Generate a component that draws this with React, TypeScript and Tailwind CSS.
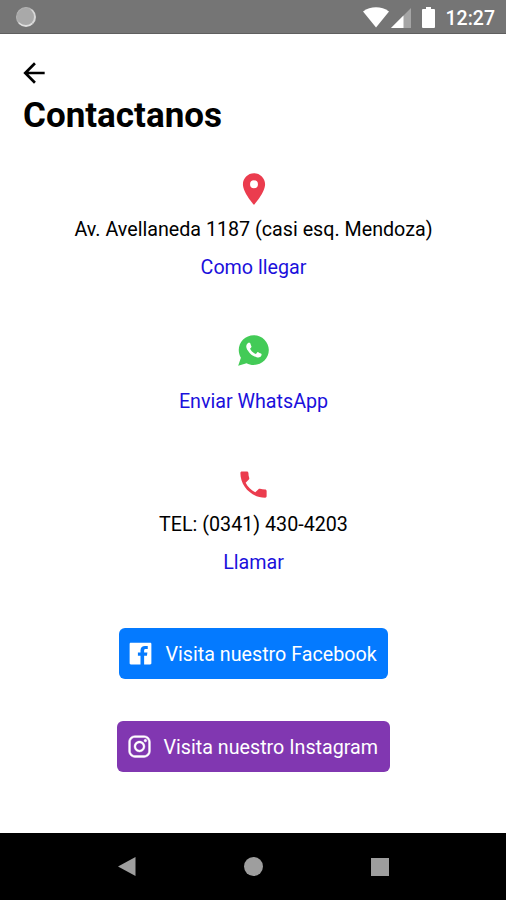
import React from 'react'
import { IoLogoFacebook, IoLogoInstagram, IoLogoWhatsapp } from 'react-icons/io'
import { MdArrowBack, MdLocationOn, MdPhone } from 'react-icons/md'

function StatusBar() {
    return (
        <header className="flex h-[34px] items-center border-b border-[#5f5f5f] bg-[#757575] pl-4 pr-[11px] text-white">
            <span className="h-5 w-5 rounded-full border border-[#b4b4b4] border-b-2 border-b-[#e0e0e0] border-r-2 border-r-[#d8d8d8] bg-[#a9a9a9]" />
            <svg className="ml-auto mt-px h-[21px] w-[26px]" viewBox="0 0 26 21" fill="currentColor">
                <path d="M0 4.5C7.5-1.1 18.5-1.1 26 4.5L13 20.5Z" />
            </svg>
            <svg className="ml-[2px] mt-[2px] h-5 w-5" viewBox="0 0 20 20" fill="currentColor">
                <path d="M0 20L20 0V20Z" opacity="0.35" />
                <path d="M0 20L12.5 7.5V20Z" />
            </svg>
            <svg className="ml-[11px] mt-[2px] h-[21px] w-[13px]" viewBox="0 0 13 21" fill="currentColor">
                <path d="M4 0h5v2h3q1 0 1 1v17q0 1-1 1H1q-1 0-1-1V3q0-1 1-1h3z" />
            </svg>
            <span className="ml-[11px] mt-1 text-[19.5px] font-medium leading-none">12:27</span>
        </header>
    )
}

function NavigationBar() {
    return (
        <nav className="flex h-[67px] items-center justify-between bg-black pl-[118px] pr-[117px] text-[#9e9e9e]">
            <svg className="h-[19px] w-[18px]" viewBox="0 0 18 19" fill="currentColor">
                <path d="M0 9.5L17.5 0V19Z" />
            </svg>
            <span className="h-[19px] w-[19px] rounded-full bg-[#9e9e9e]" />
            <span className="h-[18px] w-[18px] bg-[#9e9e9e]" />
        </nav>
    )
}

function App() {
    return (
        <div className="flex h-[900px] w-full flex-col bg-white font-['Roboto',sans-serif] text-black">
            <StatusBar />
            <main className="flex flex-1 flex-col">
                <button className="ml-[18px] mt-[23px] h-8 w-8">
                    <MdArrowBack size={32} />
                </button>
                <h1 className="ml-[23px] mt-[6px] text-[35px] font-bold leading-[42px]">Contactanos</h1>

                <section className="mt-[33px] flex flex-col items-center pl-px text-[19.7px] leading-6">
                    <MdLocationOn size={38} color="#eb3c4e" />
                    <p className="mt-[10px]">Av. Avellaneda 1187 (casi esq. Mendoza)</p>
                    <a className="mt-[14px] text-[#1b10dc]">Como llegar</a>
                </section>

                <section className="mt-[53px] flex flex-col items-center pl-px text-[19.7px] leading-6">
                    <IoLogoWhatsapp size={35} color="#43cb57" />
                    <a className="mt-[22px] text-[#1b10dc]">Enviar WhatsApp</a>
                </section>

                <section className="mt-[53px] flex flex-col items-center pl-px text-[19.7px] leading-6">
                    <MdPhone size={35} color="#eb3c4e" />
                    <p className="mt-[11px]">TEL: (0341) 430-4203</p>
                    <a className="mt-[14px] text-[#1b10dc]">Llamar</a>
                </section>

                <section className="mt-[53px] flex flex-col items-center gap-[42px] text-[19.7px] text-white">
                    <button className="flex h-[51px] w-[269px] items-center rounded-[6px] bg-[#047aff] pl-[7px]">
                        <IoLogoFacebook size={29} />
                        <span className="ml-[11px] mt-[2px]">Visita nuestro Facebook</span>
                    </button>
                    <button className="flex h-[51px] w-[273px] items-center rounded-[6px] bg-[#8137b1] pl-[8px]">
                        <IoLogoInstagram size={29} stroke="currentColor" strokeWidth={8} />
                        <span className="ml-[10px] mt-[2px]">Visita nuestro Instagram</span>
                    </button>
                </section>
            </main>
            <NavigationBar />
        </div>
    )
}

export default App
